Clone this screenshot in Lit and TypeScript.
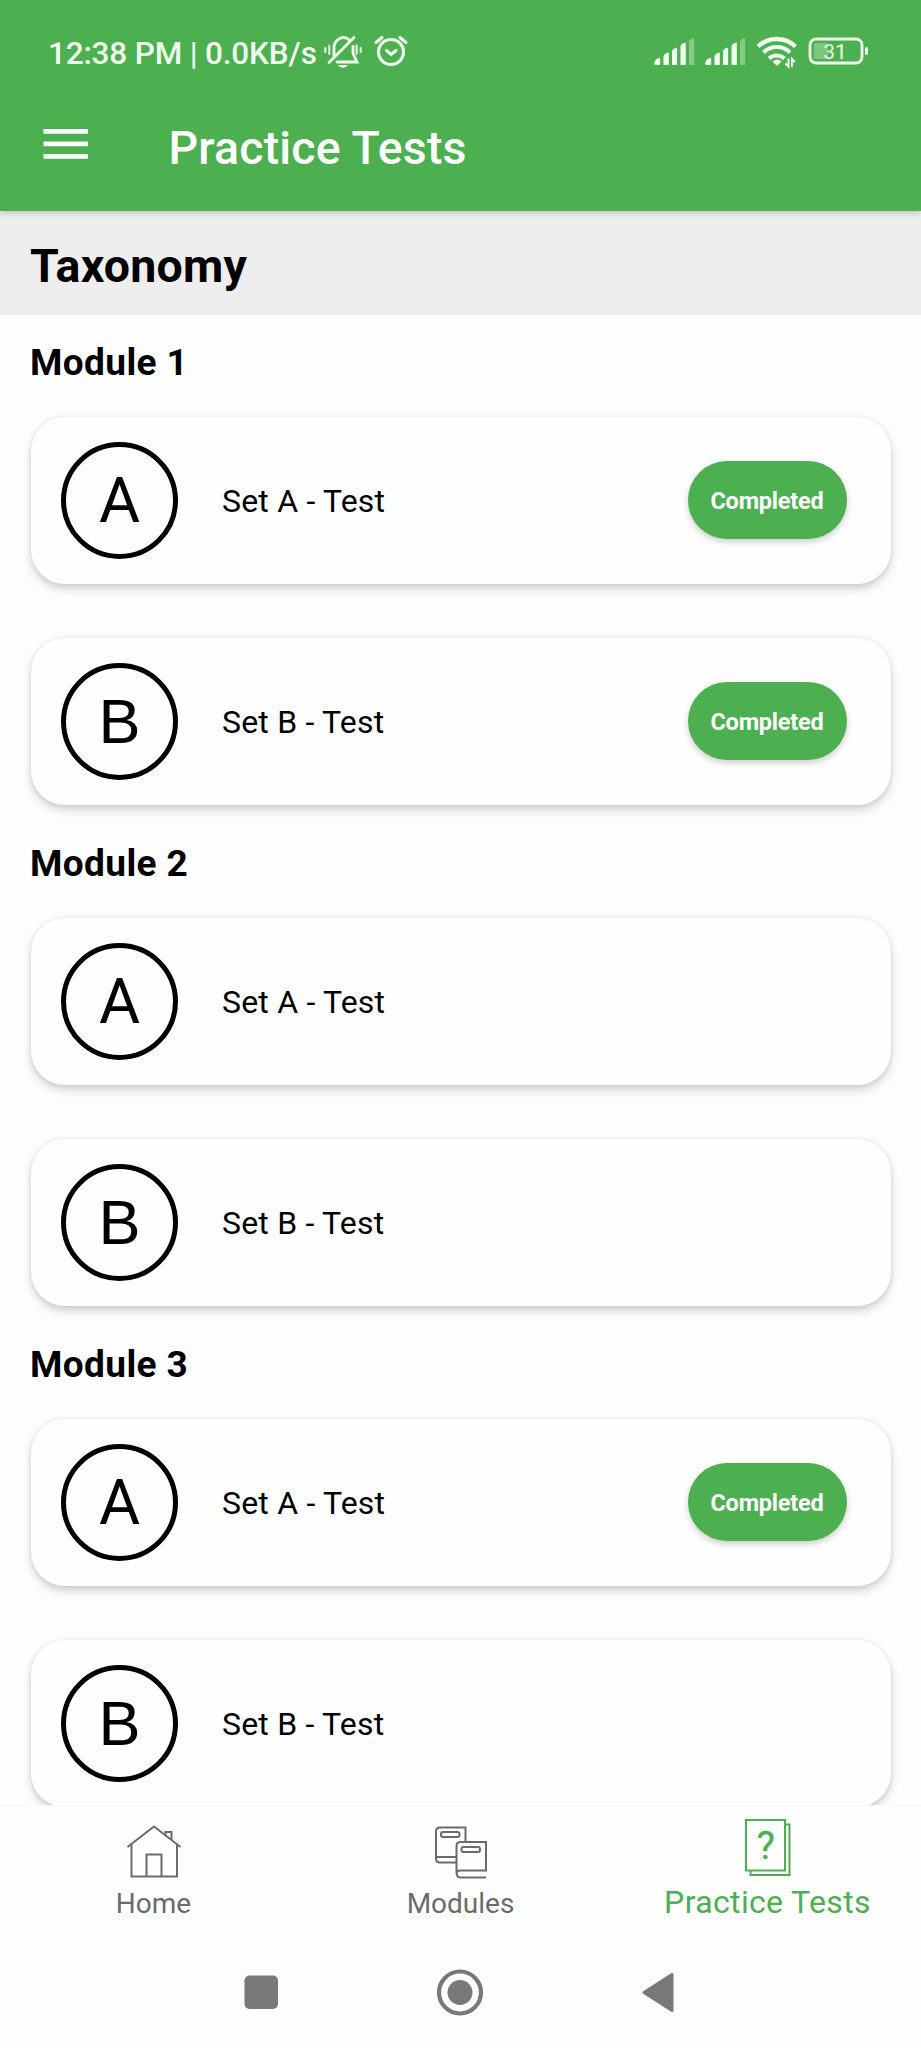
import { LitElement, html, css, svg } from "lit";
import { customElement, property } from "lit/decorators.js";
import { classMap } from "lit/directives/class-map.js";

interface TestSet { letter: string; completed: boolean; }
interface CourseModule { title: string; sets: TestSet[]; }

const MODULES: CourseModule[] = [
  { title: "Module 1", sets: [{ letter: "A", completed: true }, { letter: "B", completed: true }] },
  { title: "Module 2", sets: [{ letter: "A", completed: false }, { letter: "B", completed: false }] },
  { title: "Module 3", sets: [{ letter: "A", completed: true }, { letter: "B", completed: false }] },
];

const signal = (x: number) => svg`<g transform="translate(${x} 0)">
  <path d="M.3 36v-1.500q1-4 5.900-5v6.500q0 1-1 1H1.300q-1 0-1-1z M9.500 37v-9l1.500-2.200 3.800-1.300v12.500z M18 37v-14l1.500-2.200 3.600-1.300v17.500z M26.500 37v-19l1.500-2.200 3.800-1.300v22.500z" />
  <path opacity=".35" d="M35 37V13.500l1.500-2.200 3.600-1.300v27z" /></g>`;

@customElement("status-bar")
class StatusBar extends LitElement {
  static styles = css`
    :host { display: flex; height: 83px; align-items: flex-start; color: #f0ffee; padding: 28px 50px 0 48px; box-sizing: border-box; }
    .clock { font-size: 31.5px; font-weight: 500; line-height: 51px; letter-spacing: -.17px; white-space: nowrap; width: 276px; }
    .left { flex: none; width: 90px; height: 48px; }
    .right { flex: none; margin-left: auto; width: 221px; height: 48px; }
    .num { font: 400 21px Roboto, sans-serif; }
  `;
  render() {
    return html`
      <div class="clock">12:38 PM | 0.0KB/s</div>
      <svg class="left" viewBox="324 28 90 48" fill="none" stroke="currentColor" stroke-width="2.800" stroke-linecap="round">
        <path d="M334 56V48.500a9.500 10.500 0 0 1 15.500-8.500M353 46.500v7l4 8.500H337M329 62.500L354 37.500" />
        <path d="M337.500 65h11q-5.500 6-11 0z" fill="currentColor" stroke="none" />
        <path stroke-width="2" d="M325.300 48v4M329.300 45.500v8.500M356.600 45.500v8.500M360.700 48v4" />
        <circle cx="391" cy="52" r="12.500" stroke-width="3.200" />
        <path stroke-width="3.200" d="M386.500 50.500l4.500 4 5-4M376 42.500l6-5M400 37.500l6 5" />
      </svg>
      <svg class="right" viewBox="650 28 221 48">
        <g fill="currentColor" transform="translate(0 28)">${signal(654)}${signal(705)}</g>
        <g fill="none" stroke="currentColor">
          <path stroke-width="4.400" d="M758 46.500a27 27 0 0 1 37.500 0" />
          <path stroke-width="4" d="M763.500 52.500a19 19 0 0 1 26.500 0" />
          <path stroke-width="4" d="M769 58.500a11.500 11.500 0 0 1 15.500 0" />
          <path fill="currentColor" stroke="none" d="M772.500 61.500q4.500-4 9 0l-4.500 4.500z" />
          <path stroke-width="2" d="M788.500 58.500v8l-3-3M792 67v-8l3 3" />
          <rect x="810" y="39" width="52" height="24" rx="6" stroke-width="2.800" />
        </g>
        <rect x="814" y="43" width="14" height="16" rx="2" fill="currentColor" opacity=".3" />
        <rect x="865" y="47" width="3" height="8" rx="1.500" fill="currentColor" />
        <text class="num" x="835" y="59" text-anchor="middle" fill="currentColor">31</text>
      </svg>`;
  }
}

@customElement("set-card")
class SetCard extends LitElement {
  @property() letter = "A";
  @property({ type: Boolean }) completed = false;
  static styles = css`
    :host { display: flex; align-items: center; box-sizing: border-box; height: 167px; padding: 0 44px 0 30.500px;
      border-radius: 34px; background: #fefefe;
      box-shadow: 0 5px 9px rgba(0,0,0,.17), 0 0 5px rgba(0,0,0,.08); }
    .badge { width: 117px; height: 117px; box-sizing: border-box; border: 5px solid #000; border-radius: 50%;
      display: flex; align-items: center; justify-content: center; font: 400 63px/107px "Liberation Sans", sans-serif; }
    .narrow { font-family: Roboto, sans-serif; }
    .name { margin-left: 44px; font-size: 32px; letter-spacing: .2px; flex: 1; line-height: 38px; }
    .pill { width: 159px; height: 78px; line-height: 80px; margin-bottom: 1px; border-radius: 39px; background: #4caf50; color: #fff;
      font-size: 23.500px; letter-spacing: -.2px; font-weight: 700; text-align: center; box-shadow: 0 3px 6px rgba(0,0,0,.2); }
  `;
  render() {
    return html`<div class=${classMap({ badge: true, narrow: this.letter === "A" })}>${this.letter}</div>
      <div class="name">Set ${this.letter} - Test</div>
      ${this.completed ? html`<div class="pill">Completed</div>` : null}`;
  }
}

@customElement("app-root")
class AppRoot extends LitElement {
  static styles = css`
    :host { display: flex; flex-direction: column; height: 2048px; overflow: hidden; background: #fdfdfd;
      font-family: Roboto, sans-serif; color: #000; }
    .header { flex: none; height: 211px; background: #4caf50; z-index: 1; box-shadow: 0 2px 7px rgba(0,0,0,.2); }
    .bar { display: flex; align-items: center; height: 128px; padding: 0 43px; color: #fff; }
    .menu { width: 45px; height: 30px; margin-top: -6px; }
    .title { margin-left: 80.500px; font-size: 46.500px; letter-spacing: .15px; font-weight: 500; line-height: 60px; padding-top: 2px; }
    .subject { flex: none; height: 104px; box-sizing: border-box; padding: 6px 30px 0; background: #eee;
      font-size: 46.500px; letter-spacing: .2px; font-weight: 700; line-height: 98px; }
    .list { flex: 1; min-height: 0; overflow: hidden; }
    .module { padding: 0 30.500px 11px; display: flex; flex-direction: column; }
    .heading { margin-left: -.5px; font-size: 37px; letter-spacing: .4px; font-weight: 700; line-height: 95px; height: 102px; }
    .sets { display: flex; flex-direction: column; gap: 54px; }
    .tabs { flex: none; height: 130px; display: grid; grid-template-columns: repeat(3, 1fr); background: #fefefe; color: #6b6b6b;
      border-top: 1px solid #f7f7f7; box-sizing: border-box; }
    .tab { display: flex; flex-direction: column; align-items: center; font-size: 28px; }
    .tab svg { width: 60px; height: 64px; margin-top: 12px; }
    .tab span { line-height: 40px; margin-top: 2px; }
    .active { color: #4caf50; font-size: 32px; letter-spacing: .35px; }
    .active span { margin-top: 0; }
    .q { font: 400 38px Roboto, sans-serif; }
    .system { flex: none; height: 113px; }
    .system svg { display: block; width: 921px; height: 113px; }
  `;
  render() {
    return html`
      <div class="header">
        <status-bar></status-bar>
        <div class="bar">
          <svg class="menu" viewBox="0 0 45 30" fill="#fff"><path d="M.5 0H45v4.800H.5zM.5 12.500H45v4.800H.5zM.5 25H45v4.800H.5z" /></svg>
          <div class="title">Practice Tests</div>
        </div>
      </div>
      <div class="subject">Taxonomy</div>
      <div class="list">
        ${MODULES.map((m) => html`<div class="module">
          <div class="heading">${m.title}</div>
          <div class="sets">${m.sets.map((s) => html`<set-card letter=${s.letter} ?completed=${s.completed}></set-card>`)}</div>
        </div>`)}
      </div>
      <div class="tabs">
        <div class="tab">
          <svg viewBox="123.500 1818 60 64" fill="none" stroke="currentColor" stroke-width="2">
            <path d="M127 1847l26.500-20.500 26.500 20.500M131 1844.500v32h45.500v-32M146 1876v-21.500h15V1876M165 1835v-3h6v8" />
          </svg><span>Home</span></div>
        <div class="tab">
          <svg viewBox="431 1818 60 64" fill="none" stroke="currentColor" stroke-width="2">
            <path d="M465.500 1842v-14.500H440q-4 0-4 4v27q0 4 4 4h16M436.500 1857h19.500" />
            <rect x="441" y="1832" width="18.500" height="5" rx="2" />
            <path d="M486 1877.500h-25q-4.500 0-4.500-4.500v-27q0-4 4-4H486v28.500h-26q-3 0-3.500 3" />
            <rect x="461.500" y="1847" width="18.500" height="5" rx="2" />
          </svg><span>Modules</span></div>
        <div class="tab active">
          <svg viewBox="738 1818 60 64" fill="none" stroke="currentColor" stroke-width="2">
            <path d="M746 1820h39v50.500h-39zM785 1824.500h4.500v50.500H750.500v-4.500" />
            <text class="q" x="766" y="1859" text-anchor="middle" fill="currentColor" stroke="currentColor" stroke-width=".4">?</text>
          </svg><span>Practice Tests</span></div>
      </div>
      <div class="system">
        <svg viewBox="0 1935 921 113" fill="#787878">
          <rect x="244.500" y="1975.500" width="33.500" height="33.500" rx="5" />
          <circle cx="460" cy="1992.500" r="12.500" />
          <circle cx="460" cy="1992.500" r="21" fill="none" stroke="#787878" stroke-width="4.200" />
          <path d="M644 1992.500L672 1974.500V2010.500z" stroke="#787878" stroke-width="3" stroke-linejoin="round" />
        </svg>
      </div>`;
  }
}
